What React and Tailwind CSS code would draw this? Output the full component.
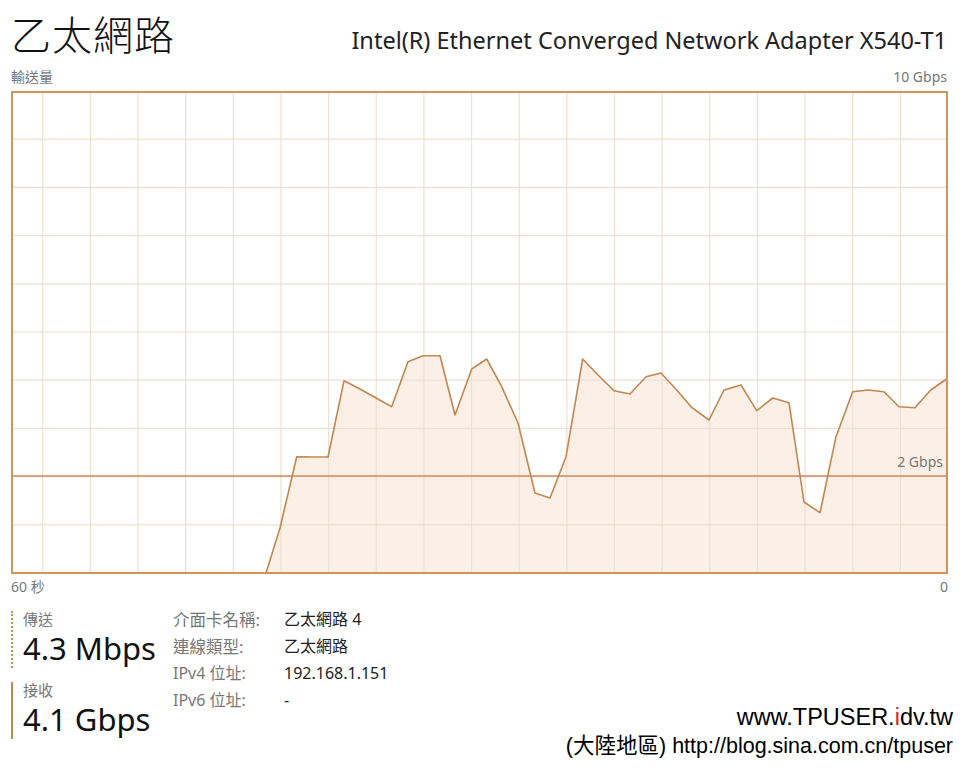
import React from "react";

const pts = [
  [266, 573], [280, 528], [296.7, 456.7], [313, 457], [328, 457], [344, 380.7], [360, 389],
  [391.7, 406.7], [408, 361.7], [423, 355.7], [440, 355.7], [455, 415], [471.7, 369],
  [486.7, 359], [501.7, 386.7], [518, 423], [535, 493], [550, 498], [566, 456.7],
  [582.7, 359], [598, 375], [614, 390.7], [630, 394], [646, 376.7], [661, 373],
  [676.7, 390], [692, 407.7], [709, 420], [724, 390], [741, 385], [756.7, 410.7],
  [772.7, 398], [789, 402.7], [804, 502], [820, 512.7], [836, 436.7], [852.7, 391.7],
  [868, 390], [884, 391.7], [899, 406.7], [915, 407.7], [930.7, 390], [946.5, 379],
];

const OX = 11;
const OY = 91;
const W = 937;
const H = 483;

function Chart() {
  const p = pts.map(([x, y]) => [x - OX, y - OY]);
  const line = p.map(([x, y]) => `${x.toFixed(1)},${y.toFixed(1)}`).join(" ");
  const fill = `${line} ${W - 1},${H - 1} ${p[0][0]},${H - 1}`;
  const vlines = [];
  for (let k = 0; k < 19; k++) vlines.push(42.7 + 47.65 * k - OX);
  const hlines = [];
  for (let k = 1; k < 10; k++) hlines.push(48.2 * k);
  return (
    <div className="relative w-[937px] h-[483px]">
      <svg width={W} height={H} viewBox={`0 0 ${W} ${H}`} className="block">
        <rect x="0" y="0" width={W} height={H} fill="#ffffff" />
        <polygon points={fill} fill="#fcf0e6" />
        {vlines.map((x, i) => (
          <line key={"v" + i} x1={x} y1="0" x2={x} y2={H} stroke="#eee0d2" strokeWidth="1.2" />
        ))}
        {hlines.map((y, i) => (
          <line key={"h" + i} x1="0" y1={y} x2={W} y2={y} stroke="#eee0d2" strokeWidth="1.2" />
        ))}
        <line x1="0" y1={476 - OY} x2={W} y2={476 - OY} stroke="#c98e5c" strokeWidth="1.6" />
        <polyline points={line} fill="none" stroke="#c4864f" strokeWidth="1.6" strokeLinejoin="round" />
        <rect x="1" y="1" width={W - 2} height={H - 2} fill="none" stroke="#cf955f" strokeWidth="2" />
      </svg>
      <div className="absolute right-[5px] top-[364px] text-[14px] leading-none text-[#777]">2 Gbps</div>
    </div>
  );
}

export default function App() {
  const font = { fontFamily: '"Noto Sans", "Noto Sans CJK TC", sans-serif' };
  return (
    <div
      className="relative w-[969px] h-[768px] bg-white overflow-hidden"
      style={font}
    >
      <div className="pl-[11px] pr-[22px]">
        <div className="flex items-end justify-between h-[62px]">
          <div className="text-[40px] font-light leading-none text-[#111] pb-[9px] tracking-[1px]" style={{ fontFamily: '"Noto Sans CJK TC", sans-serif' }}>乙太網路</div>
          <div className="text-[23.5px] leading-none text-[#222] pb-[10px]">Intel(R) Ethernet Converged Network Adapter X540-T1</div>
        </div>
        <div className="flex justify-between text-[14px] leading-none text-[#777] h-[29px] pt-[8px]">
          <span>輸送量</span>
          <span>10 Gbps</span>
        </div>
        <Chart />
        <div className="flex justify-between w-[937px] text-[14px] leading-none text-[#777] pt-[6px]">
          <span>60 秒</span>
          <span>0</span>
        </div>
        <div className="flex mt-[17px] items-start">
          <div className="w-[162px] flex flex-col gap-[14px]">
            <div className="border-l-2 border-dotted border-[#d28a52] pl-[10px]">
              <div className="text-[15px] leading-[17px] text-[#777]">傳送</div>
              <div className="text-[31px] leading-[40px] text-[#111]">4.3 Mbps</div>
            </div>
            <div className="border-l-2 border-solid border-[#c4864f] pl-[10px]">
              <div className="text-[15px] leading-[17px] text-[#777]">接收</div>
              <div className="text-[31px] leading-[40px] text-[#111]">4.1 Gbps</div>
            </div>
          </div>
          <div className="-mt-[5px] grid grid-cols-[111px_auto] auto-rows-[27px] text-[16px] leading-[27px]">
            <span className="text-[#777] text-[16.5px]">介面卡名稱:</span>
            <span className="text-[#222]">乙太網路 4</span>
            <span className="text-[#777] text-[16.5px]">連線類型:</span>
            <span className="text-[#222]">乙太網路</span>
            <span className="text-[#777]">IPv4 位址:</span>
            <span className="text-[#222]">192.168.1.151</span>
            <span className="text-[#777]">IPv6 位址:</span>
            <span className="text-[#222]">-</span>
          </div>
        </div>
      </div>
      <div
        className="absolute right-[16px] bottom-[7px] flex flex-col items-end text-black"
        style={{ fontFamily: '"Liberation Sans", "Noto Sans CJK TC", sans-serif' }}
      >
        <div className="text-[23.5px] leading-[28px]">www.TPUSER.<span className="text-[#e02020]">i</span>dv.tw</div>
        <div className="text-[21.5px] leading-[30px]">(大陸地區) http://blog.sina.com.cn/tpuser</div>
      </div>
    </div>
  );
}
